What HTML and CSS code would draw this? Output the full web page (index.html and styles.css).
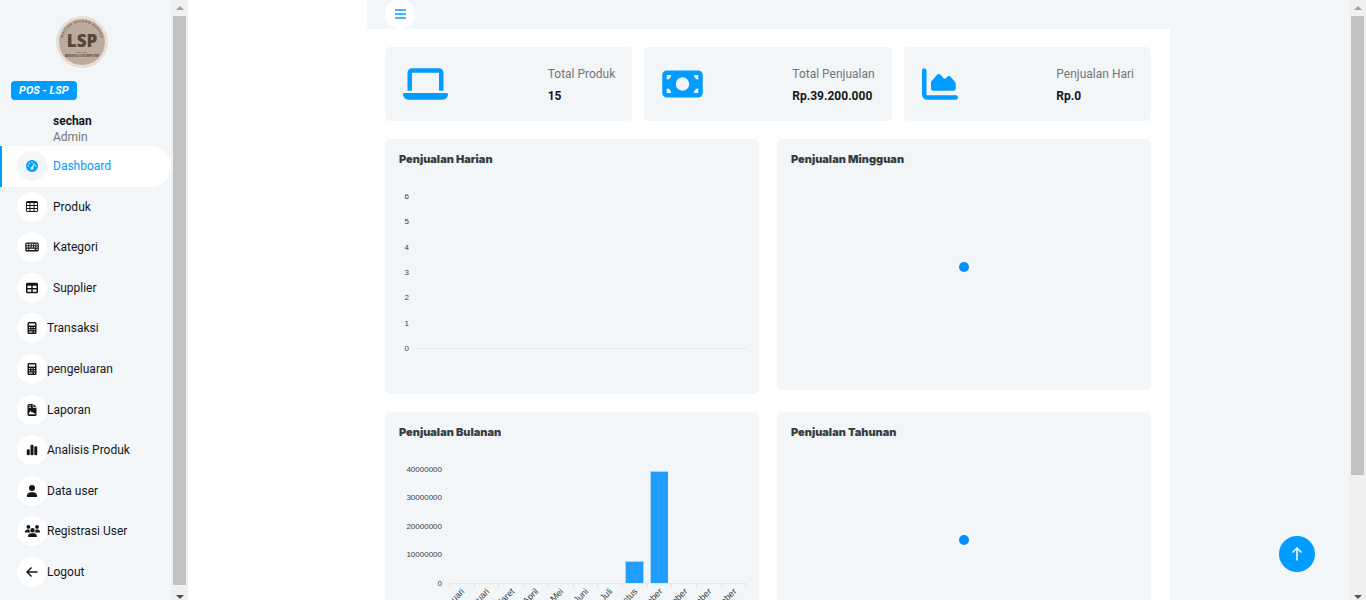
FILE: index.html
```html
<!DOCTYPE html>
<html lang="id">
<head>
<meta charset="utf-8">
<title>POS - LSP</title>
<link rel="stylesheet" href="styles.css">
</head>
<body>
<div class="shell">
  <aside class="sidebar">
    <div class="brand">
      <svg class="logo" viewBox="0 0 52 52" role="img" aria-label="LSP">
        <defs>
          <path id="arc" d="M7.500 32A19.500 19.500 0 1 1 44.500 32"/>
        </defs>
        <circle cx="26" cy="26" r="26" fill="#eaddd3"/>
        <circle cx="26" cy="26" r="23" fill="#bcaa9d"/>
        <text class="logo-ring"><textPath href="#arc" startOffset="50%">M A S T O R &#160; S E C O N D &#160; B A R E N G</textPath></text>
        <text class="logo-name" x="26" y="31">LSP</text>
        <text class="logo-small" x="26" y="37">SERVICE BY</text>
        <text class="logo-sub" x="26" y="41">BENGKULU KOMPUTER</text>
      </svg>
    </div>
    <a class="tag" href="#">POS - LSP</a>
    <div class="profile"><b class="user">sechan</b><span class="role">Admin</span></div>
    <ul class="menu">
      <li class="active"><a class="wide" href="#"><span class="dot"><svg viewBox="0 0 512 512"><path fill-rule="evenodd" d="M0 256a256 256 0 1 1 512 0A256 256 0 1 1 0 256zM288 96a32 32 0 1 0-64 0 32 32 0 1 0 64 0zM256 416c35.300 0 64-28.700 64-64 0-16.200-6-31.100-16-42.300l69.500-138.900c5.900-11.900 1.100-26.300-10.700-32.200s-26.300-1.100-32.200 10.700L261.100 288.200c-1.700-.1-3.400-.2-5.100-.2-35.300 0-64 28.700-64 64s28.700 64 64 64zM176 144a32 32 0 1 0-64 0 32 32 0 1 0 64 0zM96 288a32 32 0 1 0 0-64 32 32 0 1 0 0 64zM448 256a32 32 0 1 0-64 0 32 32 0 1 0 64 0z"/></svg></span>Dashboard</a></li>
      <li><a class="wide" href="#"><span class="dot"><svg viewBox="0 0 12 12"><path fill-rule="evenodd" d="M1.500 0h9a1.500 1.500 0 0 1 1.500 1.500v8a1.500 1.500 0 0 1-1.500 1.500h-9A1.500 1.500 0 0 1 0 9.500v-8A1.500 1.500 0 0 1 1.500 0zM1 2v2h2.500V2zm3.500 0v2h3V2zm4 0v2H11V2zM1 5v2h2.500V5zm3.500 0v2h3V5zm4 0v2H11V5zM1 8v2h2.500V8zm3.500 0v2h3V8zm4 0v2H11V8z"/></svg></span>Produk</a></li>
      <li><a class="wide" href="#"><span class="dot"><svg class="broad" viewBox="0 0 576 512"><path fill-rule="evenodd" d="M64 64H512a64 64 0 0 1 64 64V384a64 64 0 0 1-64 64H64a64 64 0 0 1-64-64V128A64 64 0 0 1 64 64zM56 120v56h72v-56zm112 0v56h64v-56zm104 0v56h64v-56zm104 0v56h56v-56zm96 0v56h56v-56zM56 224v56h72v-56zm112 0v56h64v-56zm104 0v56h64v-56zm104 0v56h56v-56zm96 0v56h56v-56zM56 328v56h72v-56zm112 0v56h240v-56zm304 0v56h56v-56z"/></svg></span>Kategori</a></li>
      <li><a class="wide" href="#"><span class="dot"><svg viewBox="0 0 512 512"><path fill-rule="evenodd" d="M64 256V160H224v96H64zm0 64H224v96H64V320zm224 96V320H448v96H288zM448 256H288V160H448v96zM64 32C28.700 32 0 60.700 0 96V416c0 35.300 28.700 64 64 64H448c35.300 0 64-28.700 64-64V96c0-35.300-28.700-64-64-64H64z"/></svg></span>Supplier</a></li>
      <li><a href="#"><span class="dot"><svg viewBox="0 0 512 512"><path fill-rule="evenodd" d="M128 0H384a64 64 0 0 1 64 64V448a64 64 0 0 1-64 64H128a64 64 0 0 1-64-64V64A64 64 0 0 1 128 0zM128 64v80h256V64zM128 208v48h48v-48zm104 0v48h48v-48zm104 0v48h48v-48zM128 304v48h48v-48zm104 0v48h48v-48zm104 0v48h48v-48zM128 400v48h152v-48zm208 0v48h48v-48z"/></svg></span>Transaksi</a></li>
      <li><a href="#"><span class="dot"><svg viewBox="0 0 512 512"><path fill-rule="evenodd" d="M128 0H384a64 64 0 0 1 64 64V448a64 64 0 0 1-64 64H128a64 64 0 0 1-64-64V64A64 64 0 0 1 128 0zM128 64v80h256V64zM128 208v48h48v-48zm104 0v48h48v-48zm104 0v48h48v-48zM128 304v48h48v-48zm104 0v48h48v-48zm104 0v48h48v-48zM128 400v48h152v-48zm208 0v48h48v-48z"/></svg></span>pengeluaran</a></li>
      <li><a href="#"><span class="dot"><svg viewBox="0 0 512 512"><path fill-rule="evenodd" d="M64 64a64 64 0 0 1 64-64H288V128a32 32 0 0 0 32 32H448V448a64 64 0 0 1-64 64H128a64 64 0 0 1-64-64zM320 0l128 128H320zM120 64v32h96V64zm0 64v32h96v-32zM112 432h280v-40h-64l-40-48-40 32-48-88-72 104z"/></svg></span>Laporan</a></li>
      <li><a href="#"><span class="dot"><svg viewBox="0 0 512 512"><path d="M192 80a48 48 0 0 1 48-48h32a48 48 0 0 1 48 48V432a48 48 0 0 1-48 48H240a48 48 0 0 1-48-48zM32 272a48 48 0 0 1 48-48h32a48 48 0 0 1 48 48V432a48 48 0 0 1-48 48H80a48 48 0 0 1-48-48zM400 96h32a48 48 0 0 1 48 48V432a48 48 0 0 1-48 48H400a48 48 0 0 1-48-48V144a48 48 0 0 1 48-48z"/></svg></span>Analisis Produk</a></li>
      <li><a href="#"><span class="dot"><svg viewBox="0 0 512 512"><path d="M256 256A128 128 0 1 0 256 0a128 128 0 1 0 0 256zm-46 48C112 304 32 384 32 482c0 17 13 30 30 30H450c17 0 30-13 30-30 0-98-80-178-178-178z"/></svg></span>Data user</a></li>
      <li><a href="#"><span class="dot"><svg class="people" viewBox="0 0 640 512"><path d="M144 0a80 80 0 1 1 0 160A80 80 0 1 1 144 0zM512 0a80 80 0 1 1 0 160A80 80 0 1 1 512 0zM0 298.700C0 239.800 47.800 192 106.700 192h42.700c15.900 0 31 3.500 44.600 9.700-1.300 7.200-1.900 14.700-1.900 22.300 0 38.200 16.800 72.500 43.300 96H21.300C9.600 320 0 310.400 0 298.700zM405.300 320c26.600-23.500 43.300-57.800 43.300-96 0-7.600-.7-15-1.900-22.300 13.600-6.300 28.700-9.700 44.600-9.700h42.700C592.200 192 640 239.800 640 298.700c0 11.800-9.600 21.300-21.300 21.300zM224 224a96 96 0 1 1 192 0 96 96 0 1 1-192 0zM128 485.300C128 411.700 187.700 352 261.300 352H378.700C452.300 352 512 411.700 512 485.300c0 14.700-11.900 26.700-26.700 26.700H154.700c-14.700 0-26.700-11.900-26.700-26.700z"/></svg></span>Registrasi User</a></li>
      <li><a href="#"><span class="dot"><svg class="line" viewBox="0 0 12 12"><path d="M11.500 6H1M5.500 1.500L1 6l4.500 4.500"/></svg></span>Logout</a></li>
    </ul>
  </aside>
  <div class="scrollbar side-scroll"><i class="up"></i><i class="thumb"></i><i class="down"></i></div>
  <div class="page">
    <header class="topbar">
      <button class="toggle" aria-label="Menu"><svg viewBox="0 0 12 10"><path d="M1 1h11M1 5h11M1 9h11"/></svg></button>
    </header>
    <main class="content">
      <section class="stats">
        <article class="stat">
          <svg class="stat-icon laptop" viewBox="0 0 640 512"><path d="M128 32C92.700 32 64 60.700 64 96V352h64V96H512V352h64V96c0-35.300-28.700-64-64-64H128zM19.200 384C8.600 384 0 392.600 0 403.200C0 445.600 34.400 480 76.800 480H563.200c42.400 0 76.800-34.400 76.800-76.800c0-10.600-8.600-19.200-19.200-19.200H19.200z"/></svg>
          <div class="stat-text"><span>Total Produk</span><b>15</b></div>
        </article>
        <article class="stat">
          <svg class="stat-icon bill" viewBox="0 0 576 512"><path d="M64 64C28.700 64 0 92.700 0 128V384c0 35.300 28.700 64 64 64H512c35.300 0 64-28.700 64-64V128c0-35.300-28.700-64-64-64H64zm64 320H64V320c35.300 0 64 28.700 64 64zM64 192V128h64c0 35.300-28.700 64-64 64zM448 384c0-35.300 28.700-64 64-64v64H448zm64-192c-35.300 0-64-28.700-64-64h64v64zM288 160a96 96 0 1 1 0 192 96 96 0 1 1 0-192z"/></svg>
          <div class="stat-text"><span>Total Penjualan</span><b>Rp.39.200.000</b></div>
        </article>
        <article class="stat">
          <svg class="stat-icon" viewBox="0 0 512 512"><path d="M64 64c0-17.700-14.300-32-32-32S0 46.300 0 64V400c0 44.200 35.800 80 80 80H480c17.700 0 32-14.300 32-32s-14.300-32-32-32H80c-8.800 0-16-7.200-16-16V64zm96 288H448c17.700 0 32-14.300 32-32V251.800c0-7.600-2.700-15-7.700-20.800l-65.800-76.800c-12.100-14.200-33.700-15-46.900-1.800l-21 21c-10 10-26.400 9.200-35.400-1.600l-39.200-47c-12.600-15.100-35.700-15.400-48.700-.6L135.900 215c-5.100 5.800-7.900 13.300-7.900 21.100v84c0 17.700 14.300 32 32 32z"/></svg>
          <div class="stat-text"><span>Penjualan Hari</span><b>Rp.0</b></div>
        </article>
      </section>
      <section class="charts">
        <article class="panel">
          <h2>Penjualan Harian</h2>
          <svg class="plot" viewBox="0 0 374 215">
            <g class="ticks"><text x="24" y="20">6</text><text x="24" y="45">5</text><text x="24" y="71">4</text><text x="24" y="96">3</text><text x="24" y="121">2</text><text x="24" y="147">1</text><text x="24" y="172">0</text></g>
            <path class="axis" d="M31 169.500H361"/>
          </svg>
        </article>
        <article class="panel">
          <h2>Penjualan Mingguan</h2>
          <svg class="plot" viewBox="0 0 374 211"><circle class="bar" cx="187" cy="88" r="5"/></svg>
        </article>
        <article class="panel">
          <h2>Penjualan Bulanan</h2>
          <svg class="plot" viewBox="0 0 374 215">
            <g class="ticks"><text x="57" y="20">40000000</text><text x="57" y="48">30000000</text><text x="57" y="77">20000000</text><text x="57" y="105">10000000</text><text x="57" y="134">0</text></g>
            <path class="axis" d="M64 131.500H361M64.500 131v5M89.500 131v5M113.500 131v5M138.500 131v5M163.500 131v5M188.500 131v5M212.500 131v5M237.500 131v5M262.500 131v5M286.500 131v5M311.500 131v5M336.500 131v5M360.500 131v5"/>
            <path class="bar halo" d="M240 109h19v22h-19zM265 19h18v112h-18z"/>
            <path class="bar" d="M241 110h17v21h-17zM266 20h17v111h-17z"/>
            <g class="months">
              <text transform="translate(80 140) rotate(-45)">Januari</text>
              <text transform="translate(105 140) rotate(-45)">Februari</text>
              <text transform="translate(130 140) rotate(-45)">Maret</text>
              <text transform="translate(154 140) rotate(-45)">April</text>
              <text transform="translate(179 140) rotate(-45)">Mei</text>
              <text transform="translate(204 140) rotate(-45)">Juni</text>
              <text transform="translate(228 140) rotate(-45)">Juli</text>
              <text transform="translate(253 140) rotate(-45)">Agustus</text>
              <text transform="translate(278 140) rotate(-45)">September</text>
              <text transform="translate(303 140) rotate(-45)">Oktober</text>
              <text transform="translate(327 140) rotate(-45)">November</text>
              <text transform="translate(352 140) rotate(-45)">Desember</text>
            </g>
          </svg>
        </article>
        <article class="panel">
          <h2>Penjualan Tahunan</h2>
          <svg class="plot" viewBox="0 0 374 211"><circle class="bar" cx="187" cy="88" r="5"/></svg>
        </article>
      </section>
    </main>
  </div>
  <div class="scrollbar page-scroll"><i class="up"></i><i class="thumb"></i><i class="down"></i></div>
  <button class="to-top" aria-label="Ke atas"><svg viewBox="0 0 12 14"><path d="M6 13.500V1M1.500 5.500L6 1l4.500 4.500"/></svg></button>
</div>
</body>
</html>
```
FILE: styles.css
```css
* { box-sizing: border-box; }
body { margin: 0; font: 12px/16px Roboto, sans-serif; color: #16161a; background: #fff; }
a { color: inherit; text-decoration: none; }
button { border: 0; padding: 0; display: flex; align-items: center; justify-content: center; border-radius: 50%; }
.shell { display: flex; height: 100vh; overflow: hidden; }

.sidebar { flex: 0 0 171px; background: #f2f6f9; overflow: hidden; }
.brand { display: flex; justify-content: center; padding: 16px 8px 0 0; }
.logo { width: 52px; height: 52px; }
.logo text { fill: #57463b; text-anchor: middle; font-family: "Open Sans", sans-serif; }
.logo .logo-ring { font-size: 3px; font-weight: 600; }
.logo .logo-name { font-size: 17px; font-weight: 800; }
.logo .logo-small { font-size: 2px; }
.logo .logo-sub { font-size: 3px; font-weight: 700; }
.tag { display: inline-block; margin: 13px 0 0 11px; padding: 0 8px; border-radius: 4px; background: #009cff; color: #fff; font: italic 700 11px/19px Roboto, sans-serif; vertical-align: top; }
.profile { display: flex; flex-direction: column; padding: 13px 0 1px 53px; }
.user { font-weight: 700; }
.role { color: #757575; }
.menu { list-style: none; margin: 0; padding: 0; display: grid; grid-auto-rows: 1fr; height: 446px; }
.menu a { display: flex; align-items: center; height: 100%; padding-left: 17px; }
.menu .wide { gap: 6px; }
.menu .active { color: #009cff; background: #fff; border-radius: 0 20px 20px 0; border-left: 2px solid #009cff; }
.menu .active a { padding-left: 15px; }
.dot { display: flex; align-items: center; justify-content: center; width: 30px; height: 30px; border-radius: 50%; background: #fff; }
.active .dot { background: #f2f6f9; }
.dot svg { width: 12px; height: 12px; fill: currentColor; }
.dot .broad { width: 14px; }
.dot .people { width: 15px; }
.dot .line { fill: none; stroke: currentColor; stroke-width: 1.500; }

.scrollbar { flex: 0 0 17px; display: flex; flex-direction: column; align-items: center; background: #f0f0f0; }
.up, .down { border: 4px solid transparent; }
.up { border-top: 0; border-bottom-color: #a0a0a0; margin: 6px 0; }
.down { border-bottom: 0; border-top-color: #505050; margin: auto 0 1px; }
.thumb { width: 13px; background: #c1c1c1; }
.side-scroll .thumb { flex: 0 0 569px; }
.page-scroll .thumb { flex: 0 0 459px; }
.side-scroll { margin-right: 179px; }

.page { flex: 1; min-width: 0; padding-right: 179px; background: #f2f6f9; }
.topbar { height: 29px; padding-left: 18px; display: flex; align-items: flex-end; }
.toggle { width: 30px; height: 30px; background: #fff; }
.toggle svg { width: 12px; height: 10px; stroke: #009cff; stroke-width: 1.500; }
.content { display: flex; flex-direction: column; gap: 18px; padding: 18px 19px 18px 18px; background: #fff; }
.stats { display: grid; grid-template-columns: repeat(3, 1fr); gap: 12px; }
.stat { display: flex; align-items: center; justify-content: space-between; padding: 14px 17px 14px 18px; background: #f2f6f9; border-radius: 5px; }
.stat-icon { width: 36px; height: 36px; fill: #009cff; }
.laptop { width: 45px; }
.bill { width: 41px; }
.stat-text { display: flex; flex-direction: column; padding-top: 2px; line-height: 22px; }
.stat-text span { color: #757575; }
.charts { display: grid; grid-template-columns: repeat(2, 1fr); gap: 18px; align-items: start; }
.panel { background: #f2f6f9; border-radius: 5px; overflow: hidden; }
.panel h2 { margin: 0; padding: 12px 14px; font: 900 11px/16px Inter, sans-serif; color: #373d3f; }
.plot { display: block; width: 100%; }
.plot text { font: 8px "Liberation Sans", Arial, sans-serif; fill: #373d3f; text-anchor: end; }
.plot .months text { font-size: 9px; }
.axis { stroke: #e3e6e9; fill: none; }
.bar { fill: #209dff; }
.halo { fill: #a3d4fb; }
circle.bar { fill: #008ffb; }
.to-top { position: fixed; right: 51px; bottom: 28px; width: 36px; height: 36px; background: #009cff; }
.to-top svg { width: 12px; height: 14px; fill: none; stroke: #fff; stroke-width: 1.500; }
```
